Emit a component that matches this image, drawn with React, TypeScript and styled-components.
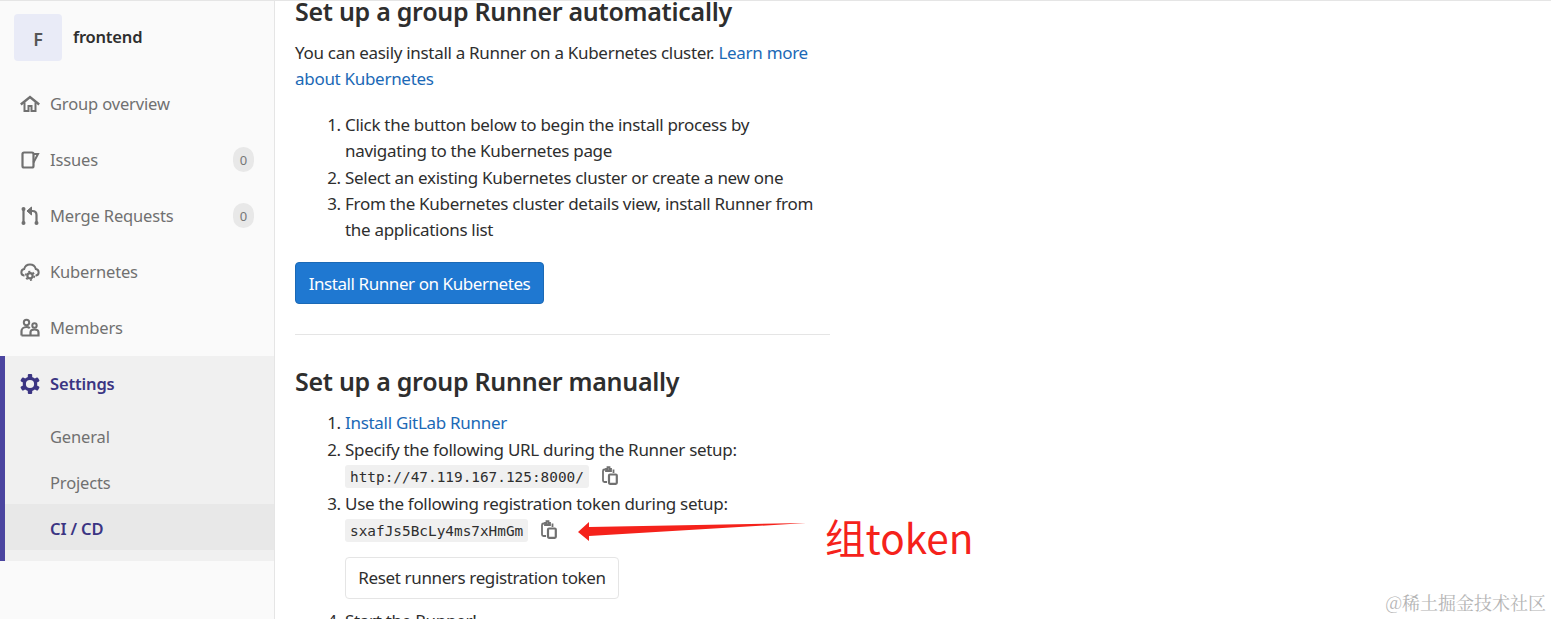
import React from "react";
import type { FC, ReactNode } from "react";
import styled, { createGlobalStyle } from "styled-components";

const GlobalStyle = createGlobalStyle`
  html, body {
    margin: 0;
    height: 100%;
    overflow: hidden;
    background: #fff;
  }
  body {
    font-family: "Noto Sans", "Open Sans", "Noto Sans CJK SC", sans-serif;
    color: #2e2e2e;
  }
`;

const Page = styled.div`
  position: relative;
  display: flex;
  width: 1551px;
  height: 619px;
  overflow: hidden;
  border-top: 1px solid #e5e5e5;
  box-sizing: border-box;
`;

const Sidebar = styled.aside`
  flex: 0 0 275px;
  box-sizing: border-box;
  background: #fafafa;
  border-right: 1px solid #e5e5e5;
`;

const GroupHeader = styled.div`
  display: flex;
  align-items: center;
  gap: 11px;
  height: 75px;
  padding: 0 14px 2px;
  box-sizing: border-box;
`;

const Avatar = styled.div`
  display: flex;
  align-items: center;
  justify-content: center;
  width: 48px;
  height: 47px;
  padding-top: 3px;
  box-sizing: border-box;
  background: #e9ebf7;
  border-radius: 4px;
  color: #555;
  font-size: 18px;
  font-weight: 600;
`;

const GroupName = styled.span`
  font-size: 16.5px;
  font-weight: 600;
  color: #2e2e2e;
  letter-spacing: -0.2px;
  margin-top: -2px;
`;

const NavItem = styled.div<{ $active?: boolean }>`
  display: flex;
  align-items: center;
  height: 56px;
  padding: 0 20px;
  box-sizing: border-box;
  gap: 10px;
  font-size: 16.5px;
  letter-spacing: -0.15px;
  font-weight: ${(p) => (p.$active ? 600 : 400)};
  color: ${(p) => (p.$active ? "#3b3583" : "#707070")};
`;

const NavIcon = styled.svg`
  flex: 0 0 20px;
  width: 20px;
  height: 20px;
  fill: none;
  stroke: currentColor;
  stroke-width: 2;
`;

const NavLabel = styled.span`
  flex: 1;
  margin-top: -1px;
`;

const Badge = styled.span`
  display: flex;
  align-items: center;
  justify-content: center;
  width: 21px;
  height: 25px;
  margin-top: -1px;
  border-radius: 12px;
  background: #e8e8e8;
  color: #777;
  font-size: 13px;
`;

const SettingsSection = styled.div`
  background: #f0f0f0;
  border-left: 5px solid #4b45a0;
  padding-bottom: 11px;

  ${NavItem} {
    padding-left: 15px;
  }
`;

const SubItem = styled.div<{ $active?: boolean }>`
  display: flex;
  align-items: center;
  height: 46px;
  padding: 2px 0 0 45px;
  box-sizing: border-box;
  font-size: 16.5px;
  letter-spacing: -0.15px;
  font-weight: ${(p) => (p.$active ? 600 : 400)};
  color: ${(p) => (p.$active ? "#3b3583" : "#707070")};
  background: ${(p) => (p.$active ? "#e8e8e8" : "transparent")};
`;

const Content = styled.main`
  width: 535px;
  margin-left: 20px;
  font-size: 17px;
  line-height: 26.3px;
  letter-spacing: -0.3px;
  color: #2e2e2e;
`;

const Heading = styled.h4<{ $first?: boolean }>`
  margin: ${(p) => (p.$first ? "-8px" : "0")} 0 0;
  font-size: 25px;
  line-height: 36px;
  font-weight: 600;
  letter-spacing: -0.28px;
  color: #2e2e2e;
`;

const Paragraph = styled.p`
  margin: 11px 0 0;
`;

const Link = styled.a`
  color: #1b69b6;
  text-decoration: none;
`;

const Steps = styled.ol<{ $gap: string; $itemGap?: string }>`
  margin: ${(p) => p.$gap} 0 0;
  padding: 0 0 0 50px;

  li {
    margin-bottom: ${(p) => p.$itemGap || "0"};
  }
`;

const Step = styled.li``;

const PrimaryButton = styled.button`
  display: block;
  width: 249px;
  height: 42px;
  margin-top: 18.6px;
  padding: 2px 0 0;
  background: #1f78d1;
  border: 1px solid #1b69b6;
  border-radius: 4px;
  color: #fff;
  font: inherit;
  letter-spacing: -0.43px;
`;

const Divider = styled.hr`
  margin: 30px 0 28px;
  border: 0;
  border-top: 1px solid #e5e5e5;
`;

const CodeRow = styled.div`
  display: flex;
  align-items: center;
  gap: 13px;
  height: 27px;
`;

const Code = styled.code`
  padding: 1px 5px;
  height: 23px;
  box-sizing: border-box;
  display: flex;
  align-items: center;
  background: #f0f0f0;
  border-radius: 3px;
  font-family: "DejaVu Sans Mono", "Liberation Mono", monospace;
  font-size: 14.4px;
  letter-spacing: 0;
  color: #2e2e2e;
`;

const CopyIcon = styled.svg`
  width: 16px;
  height: 19px;
  margin-top: -3px;
  fill: none;
  stroke: #707070;
  stroke-width: 1.8;
`;

const SecondaryButton = styled.button`
  display: block;
  width: 274px;
  height: 42px;
  margin: 13px 0 9px;
  padding: 1px 0 0;
  background: #fff;
  border: 1px solid #e5e5e5;
  border-radius: 4px;
  color: #2e2e2e;
  font: inherit;
  letter-spacing: -0.37px;
`;

const Arrow = styled.svg`
  position: absolute;
  left: 578px;
  top: 520px;
  width: 228px;
  height: 20px;
`;

const Note = styled.div`
  position: absolute;
  left: 825px;
  top: 509px;
  font-family: "Noto Sans CJK SC", "Noto Sans", sans-serif;
  font-size: 40.5px;
  line-height: 54px;
  color: #f5221b;
`;

const Watermark = styled.div`
  position: absolute;
  right: 5px;
  top: 589px;
  font-family: "Noto Serif CJK SC", "Noto Sans CJK SC", sans-serif;
  font-size: 18px;
  line-height: 24px;
  color: #b4b4b4;
`;

const icon = (path: ReactNode) => (
  <NavIcon viewBox="0 0 20 20" aria-hidden="true">
    {path}
  </NavIcon>
);

const HomeIcon = icon(
  <>
    <path strokeWidth="2.4" d="M0.8 10.5 10 3l9.200 7.500" />
    <path d="M4.500 8.500V17H8.500V12h3V17h4V8.500" />
  </>
);

const IssuesIcon = icon(
  <>
    <rect x="2.500" y="2.500" width="11" height="15" rx="1.500" strokeWidth="2.200" />
    <path d="M13.500 4H18l-4.500 8.500" />
  </>
);

const MergeIcon = icon(
  <>
    <path strokeWidth="2.200" d="M3.500 3v14M16.500 17V9c0-2.500-1.500-4-4-4H9" />
    <path strokeWidth="1" fill="currentColor" d="M11.500 1 7 5l4.500 4z" />
    <circle cx="3.500" cy="3" r="2" fill="currentColor" stroke="none" />
    <circle cx="3.500" cy="17" r="2" fill="currentColor" stroke="none" />
    <circle cx="16.500" cy="17" r="2" fill="currentColor" stroke="none" />
  </>
);

const CloudGearIcon = icon(
  <>
    <path d="M4.500 13.500H4A3.300 3.300 0 0 1 4.200 7 6 6 0 0 1 15.800 7 3.300 3.300 0 0 1 16 13.500h-.5" />
    <circle cx="10" cy="13.800" r="2.600" strokeWidth="2.200" />
    <circle cx="10" cy="13.800" r="4.300" strokeWidth="1.600" strokeDasharray="2.100 2.400" />
  </>
);

const UsersIcon = icon(
  <>
    <circle cx="6.500" cy="4.500" r="2.700" />
    <circle cx="14.500" cy="7.500" r="2.200" />
    <path strokeWidth="2.200" d="M1.500 17.500V13c0-2 2-4 5-4 1.500 0 2.500.5 3.300 1.200" />
    <path strokeWidth="2.200" d="M1.500 17.500h17V14.500c0-1.500-1.500-3-4-3s-4 1.500-4 3v3" />
  </>
);

const GearIcon = icon(
  <>
    <circle cx="10" cy="10" r="5.700" strokeWidth="3.200" />
    {[0, 60, 120, 180, 240, 300].map((angle) => (
      <rect
        key={angle}
        x="7.800"
        y="0"
        width="4.400"
        height="4"
        rx="1"
        fill="currentColor"
        stroke="none"
        transform={`rotate(${angle} 10 10)`}
      />
    ))}
  </>
);

const Copy: FC = () => (
  <CopyIcon viewBox="0 0 16 19" aria-hidden="true">
    <path d="M3.500 3.500H2.500A1.500 1.500 0 0 0 1 5v9.500A1.500 1.500 0 0 0 2.500 16H5" />
    <path d="M4 5V3h1.500V1.200h2V3H9v2zM11.500 3.500V7" />
    <rect x="7" y="8.500" width="7.800" height="9.300" rx="1" strokeWidth="2.200" />
  </CopyIcon>
);

const App: FC = () => (
  <>
    <GlobalStyle />
    <Page>
      <Sidebar>
        <GroupHeader>
          <Avatar>F</Avatar>
          <GroupName>frontend</GroupName>
        </GroupHeader>
        <NavItem>
          {HomeIcon}
          <NavLabel>Group overview</NavLabel>
        </NavItem>
        <NavItem>
          {IssuesIcon}
          <NavLabel>Issues</NavLabel>
          <Badge>0</Badge>
        </NavItem>
        <NavItem>
          {MergeIcon}
          <NavLabel>Merge Requests</NavLabel>
          <Badge>0</Badge>
        </NavItem>
        <NavItem>
          {CloudGearIcon}
          <NavLabel>Kubernetes</NavLabel>
        </NavItem>
        <NavItem>
          {UsersIcon}
          <NavLabel>Members</NavLabel>
        </NavItem>
        <SettingsSection>
          <NavItem $active>
            {GearIcon}
            <NavLabel>Settings</NavLabel>
          </NavItem>
          <SubItem>General</SubItem>
          <SubItem>Projects</SubItem>
          <SubItem $active>CI / CD</SubItem>
        </SettingsSection>
      </Sidebar>
      <Content>
        <Heading $first>Set up a group Runner automatically</Heading>
        <Paragraph>
          You can easily install a Runner on a Kubernetes cluster.{" "}
          <Link>Learn more about Kubernetes</Link>
        </Paragraph>
        <Steps $gap="19.4px">
          <Step>
            Click the button below to begin the install process by navigating to
            the Kubernetes page
          </Step>
          <Step>Select an existing Kubernetes cluster or create a new one</Step>
          <Step>
            From the Kubernetes cluster details view, install Runner from the
            applications list
          </Step>
        </Steps>
        <PrimaryButton>Install Runner on Kubernetes</PrimaryButton>
        <Divider />
        <Heading>Set up a group Runner manually</Heading>
        <Steps $gap="11px" $itemGap="0.6px">
          <Step>
            <Link>Install GitLab Runner</Link>
          </Step>
          <Step>
            Specify the following URL during the Runner setup:
            <CodeRow>
              <Code>http://47.119.167.125:8000/</Code>
              <Copy />
            </CodeRow>
          </Step>
          <Step>
            Use the following registration token during setup:
            <CodeRow>
              <Code>sxafJs5BcLy4ms7xHmGm</Code>
              <Copy />
            </CodeRow>
            <SecondaryButton>Reset runners registration token</SecondaryButton>
          </Step>
          <Step>Start the Runner!</Step>
        </Steps>
      </Content>
      <Arrow viewBox="0 0 228 20" aria-hidden="true">
        <polygon fill="#f5221b" points="0,11 11,1 11,6 228,2 11,15 11,20" />
      </Arrow>
      <Note>组token</Note>
      <Watermark>@稀土掘金技术社区</Watermark>
    </Page>
  </>
);

export default App;
